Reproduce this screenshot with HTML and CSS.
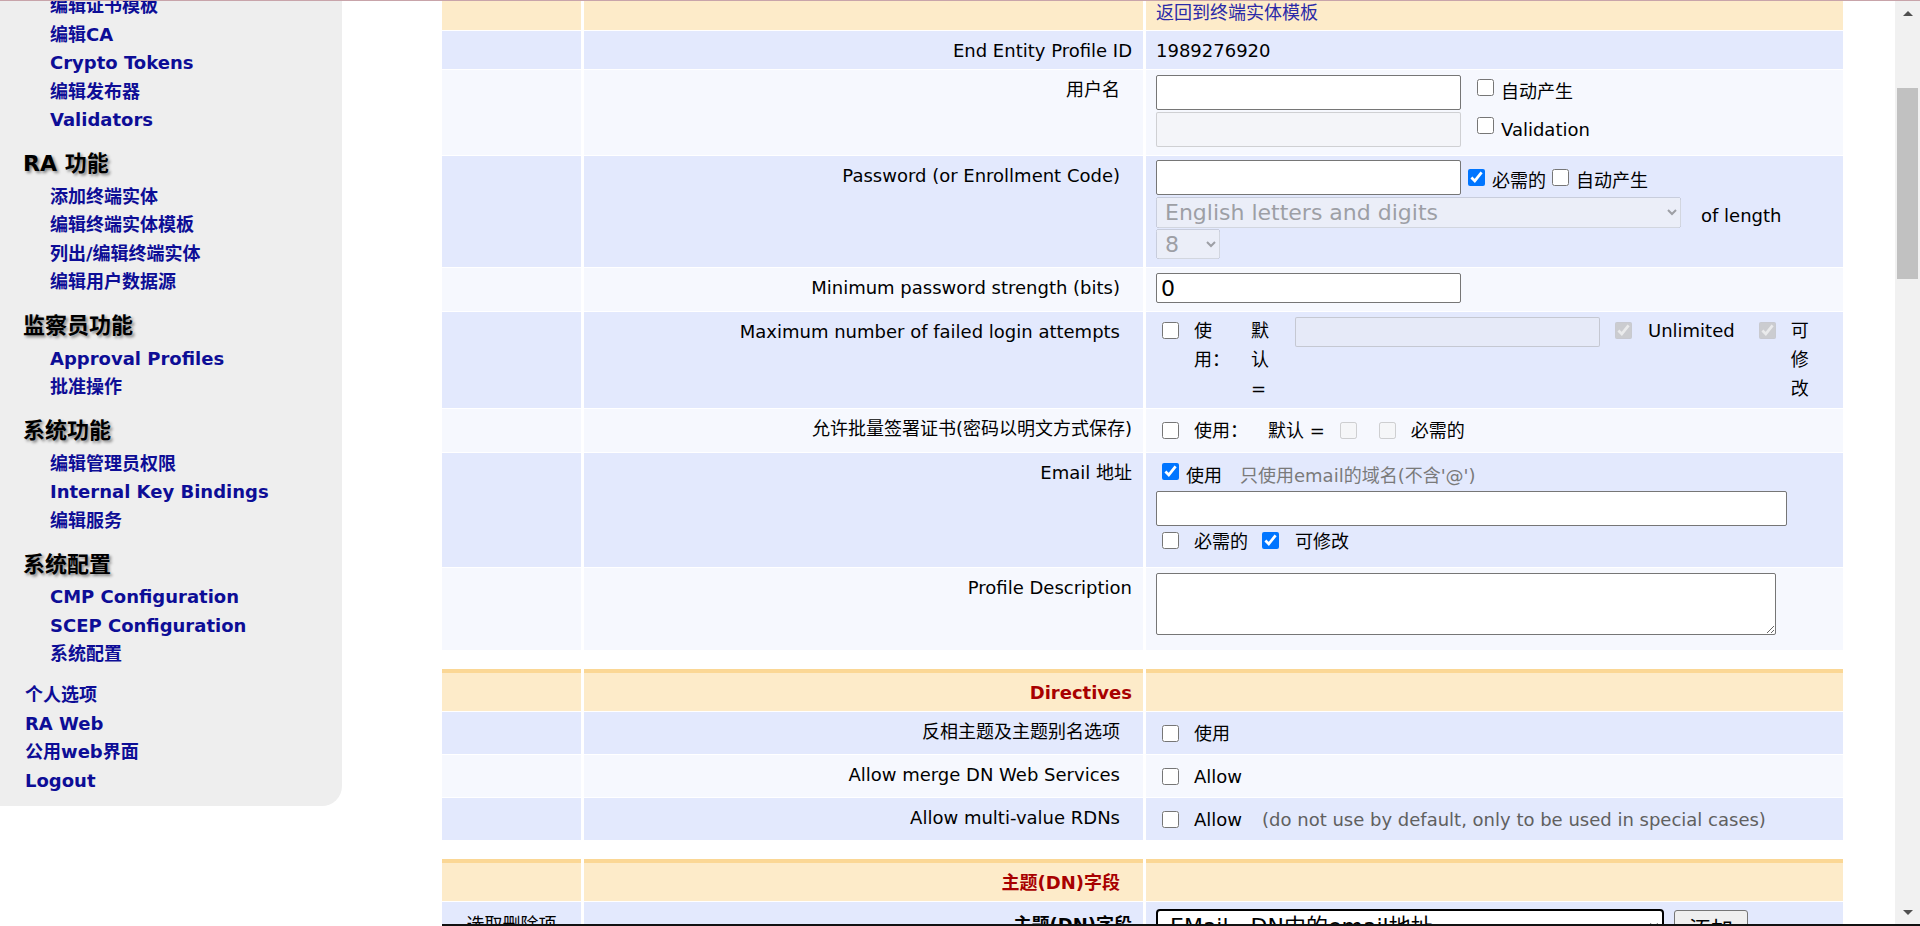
FILE: index.html
```html
<!DOCTYPE html>
<html lang="zh">
<head>
<meta charset="utf-8">
<title>编辑终端实体模板</title>
<link rel="stylesheet" href="styles.css">
</head>
<body>
<div class="page">
  <nav class="sidebar">
    <a class="sub" href="#">编辑证书模板</a>
    <a class="sub" href="#">编辑CA</a>
    <a class="sub" href="#">Crypto Tokens</a>
    <a class="sub" href="#">编辑发布器</a>
    <a class="sub" href="#">Validators</a>
    <h3>RA 功能</h3>
    <a class="sub" href="#">添加终端实体</a>
    <a class="sub" href="#">编辑终端实体模板</a>
    <a class="sub" href="#">列出/编辑终端实体</a>
    <a class="sub" href="#">编辑用户数据源</a>
    <h3>监察员功能</h3>
    <a class="sub" href="#">Approval Profiles</a>
    <a class="sub" href="#">批准操作</a>
    <h3>系统功能</h3>
    <a class="sub" href="#">编辑管理员权限</a>
    <a class="sub" href="#">Internal Key Bindings</a>
    <a class="sub" href="#">编辑服务</a>
    <h3>系统配置</h3>
    <a class="sub" href="#">CMP Configuration</a>
    <a class="sub" href="#">SCEP Configuration</a>
    <a class="sub" href="#">系统配置</a>
    <div class="misc">
      <a href="#">个人选项</a>
      <a href="#">RA Web</a>
      <a href="#">公用web界面</a>
      <a href="#">Logout</a>
    </div>
  </nav>

  <main class="main">
    <table class="grid">
      <colgroup><col class="c1"><col class="c2"><col class="c3"></colgroup>
      <tr class="hd">
        <td></td><td></td>
        <td class="val top"><a class="back" href="#">返回到终端实体模板</a></td>
      </tr>
      <tr class="b r38">
        <td></td>
        <td class="lbl">End Entity Profile ID</td>
        <td class="val">1989276920</td>
      </tr>
      <tr class="l r85">
        <td></td>
        <td class="lbl in">用户名</td>
        <td class="val p5">
          <div class="line">
            <input class="txt" type="text">
            <input class="cb un-cb1" type="checkbox">
            <span class="un-t1">自动产生</span>
          </div>
          <div class="line mt2">
            <input class="txt" type="text" disabled>
            <input class="cb un-cb2" type="checkbox">
            <span class="un-t2">Validation</span>
          </div>
        </td>
      </tr>
      <tr class="b r111">
        <td></td>
        <td class="lbl in">Password (or Enrollment Code)</td>
        <td class="val p4">
          <div class="line">
            <input class="txt" type="text">
            <input class="cb pw-cb1" type="checkbox" checked>
            <span class="pw-t1">必需的</span>
            <input class="cb pw-cb2" type="checkbox">
            <span class="pw-t2">自动产生</span>
          </div>
          <div class="line mt2">
            <select class="sel-chars" disabled><option>English letters and digits</option></select>
            <span class="oflen">of length</span>
          </div>
          <div class="line mt1">
            <select class="sel-len" disabled><option>8</option></select>
          </div>
        </td>
      </tr>
      <tr class="l r43">
        <td></td>
        <td class="lbl in">Minimum password strength (bits)</td>
        <td class="val p5">
          <input class="txt short" type="text" value="0">
        </td>
      </tr>
      <tr class="b r96">
        <td></td>
        <td class="lbl in">Maximum number of failed login attempts</td>
        <td class="val p4">
          <div class="line mf">
            <input class="cb mf-cb1" type="checkbox">
            <span class="nar mf-w1">使用：</span>
            <span class="nar mf-w2">默认 =</span>
            <input class="txt short mf-in" type="text" disabled>
            <input class="cb mf-cb2" type="checkbox" checked disabled>
            <span class="mf-unl">Unlimited</span>
            <input class="cb mf-cb3" type="checkbox" checked disabled>
            <span class="nar mf-w3">可修改</span>
          </div>
        </td>
      </tr>
      <tr class="l r43">
        <td></td>
        <td class="lbl">允许批量签署证书(密码以明文方式保存)</td>
        <td class="val mid">
          <div class="line center">
            <input class="cb ab-cb1" type="checkbox">
            <span class="ab-t1">使用：</span>
            <span class="ab-t2">默认 =</span>
            <input class="cb ab-cb2" type="checkbox" disabled>
            <input class="cb ab-cb3" type="checkbox" disabled>
            <span class="ab-t3">必需的</span>
          </div>
        </td>
      </tr>
      <tr class="b r114">
        <td></td>
        <td class="lbl">Email 地址</td>
        <td class="val p5">
          <div class="line em-l1">
            <input class="cb em-cb1" type="checkbox" checked>
            <span class="em-t1">使用</span>
            <span class="hint em-hint">只使用email的域名(不含'@')</span>
          </div>
          <input class="txt wide" type="text">
          <div class="line em-l3">
            <input class="cb em-cb2" type="checkbox">
            <span class="em-t2">必需的</span>
            <input class="cb em-cb3" type="checkbox" checked>
            <span class="em-t3">可修改</span>
          </div>
        </td>
      </tr>
      <tr class="l r82">
        <td></td>
        <td class="lbl">Profile Description</td>
        <td class="val p5">
          <textarea class="desc"></textarea>
        </td>
      </tr>
    </table>

    <table class="grid">
      <colgroup><col class="c1"><col class="c2"><col class="c3"></colgroup>
      <tr class="hd">
        <td></td>
        <td class="lbl head">Directives</td>
        <td></td>
      </tr>
      <tr class="b r42">
        <td></td>
        <td class="lbl in">反相主题及主题别名选项</td>
        <td class="val mid">
          <div class="line center">
            <input class="cb dir-cb" type="checkbox">
            <span class="dir-t">使用</span>
          </div>
        </td>
      </tr>
      <tr class="l r42">
        <td></td>
        <td class="lbl in">Allow merge DN Web Services</td>
        <td class="val mid">
          <div class="line center">
            <input class="cb dir-cb" type="checkbox">
            <span class="dir-t">Allow</span>
          </div>
        </td>
      </tr>
      <tr class="b r42">
        <td></td>
        <td class="lbl in">Allow multi-value RDNs</td>
        <td class="val mid">
          <div class="line center">
            <input class="cb dir-cb" type="checkbox">
            <span class="dir-t">Allow</span>
            <span class="hint dir-hint">(do not use by default, only to be used in special cases)</span>
          </div>
        </td>
      </tr>
    </table>

    <table class="grid">
      <colgroup><col class="c1"><col class="c2"><col class="c3"></colgroup>
      <tr class="hd">
        <td></td>
        <td class="lbl head in">主题(DN)字段</td>
        <td></td>
      </tr>
      <tr class="b r44">
        <td class="c1txt">选取删除项</td>
        <td class="lbl strong midlbl">主题(DN)字段</td>
        <td class="val p5">
          <div class="line">
            <select class="sel-dn"><option>EMail，DN中的email地址</option></select>
            <button class="btn" type="button">添加</button>
          </div>
        </td>
      </tr>
    </table>
  </main>

  <div class="vscroll">
    <div class="sb-btn"><span class="tri-up"></span></div>
    <div class="sb-track"><div class="sb-thumb"></div></div>
    <div class="sb-btn"><span class="tri-down"></span></div>
  </div>
</div>
</body>
</html>
```

FILE: styles.css
```css
* { box-sizing: border-box; }

html, body {
  margin: 0;
  padding: 0;
  height: 926px;
  overflow: hidden;
  background: #fff;
}

body {
  font-family: "DejaVu Sans", "Noto Sans CJK SC", sans-serif;
  font-size: 18px;
  line-height: 21px;
  color: #000;
}

body::before {
  content: "";
  position: fixed;
  left: 0;
  right: 0;
  top: 0;
  height: 1px;
  background: #c8a4aa;
  z-index: 5;
}

body::after {
  content: "";
  position: fixed;
  left: 442px;
  right: 0;
  bottom: 0;
  height: 2px;
  background: #111;
  z-index: 5;
}

.page {
  display: flex;
  height: 926px;
  overflow: hidden;
}

/* ---------- sidebar ---------- */
.sidebar {
  flex: none;
  width: 342px;
  align-self: flex-start;
  margin-top: -8px;
  padding: 0 0 11px 0;
  background: #eeeeee;
  border-bottom-right-radius: 20px;
}

.sidebar a {
  display: block;
  color: #0d0d96;
  font-weight: bold;
  text-decoration: none;
  line-height: 28.5px;
  white-space: nowrap;
}

.sidebar .sub { padding-left: 50px; }

.sidebar h3 {
  margin: 15.75px 0 4.25px;
  padding-left: 23px;
  font-size: 22px;
  line-height: 28px;
  font-weight: bold;
  color: #000;
  text-shadow: 2px 2px 3px rgba(0, 0, 0, 0.45);
}

.sidebar .misc { margin-top: 12.5px; }
.sidebar .misc a { padding-left: 25px; }

/* ---------- main ---------- */
.main {
  flex: 1;
  min-width: 0;
  margin-top: -13px;
  padding-left: 97px;
}

.grid {
  width: 1407px;
  table-layout: fixed;
  border-collapse: separate;
  border-spacing: 3px 1px;
}

.grid + .grid { margin-top: 17px; }

.c1 { width: 139px; }
.c2 { width: 559px; }
.c3 { width: 697px; }

.grid td {
  padding: 0;
  box-sizing: border-box;
}

tr.hd { height: 42px; }
tr.hd td {
  background: #fdebc9;
  border-top: 4px solid #fbd795;
}

tr.b td { background: #e3e9fd; }
tr.l td { background: #f6f8fe; }

tr.r38 { height: 38px; }
tr.r42 { height: 42px; }
tr.r43 { height: 43px; }
tr.r44 { height: 44px; }
tr.r82 { height: 82px; }
tr.r85 { height: 85px; }
tr.r96 { height: 96px; }
tr.r111 { height: 111px; }
tr.r114 { height: 114px; }

.grid td.lbl {
  text-align: right;
  vertical-align: top;
  padding: 8.5px 11px 0 0;
  white-space: nowrap;
}
.grid td.lbl.in { padding-right: 23px; }
.grid td.lbl.head { color: #a80000; font-weight: bold; }
.grid td.lbl.strong { font-weight: bold; }
.grid td.lbl.midlbl { vertical-align: middle; padding-top: 0; }

.grid td.c1txt {
  text-align: center;
  vertical-align: middle;
}

.grid td.val {
  vertical-align: top;
  padding: 8.5px 10px 0;
}
.grid td.val.top { padding-top: 10px; }
.grid td.val.p4 { padding-top: 4px; }
.grid td.val.p5 { padding-top: 5px; }
.grid td.val.mid { vertical-align: middle; padding-top: 0; }

.back {
  color: #2a2aa8;
  text-decoration: none;
}

.line {
  display: flex;
  align-items: flex-start;
  white-space: nowrap;
}
.line.center { align-items: center; }
.mt1 { margin-top: 1px; }
.mt2 { margin-top: 2px; }

/* ---------- controls ---------- */
.txt {
  flex: none;
  display: block;
  width: 305px;
  height: 35px;
  margin: 0;
  padding: 1px 4px;
  border: 1px solid #767676;
  border-radius: 2px;
  background: #fff;
  font-family: "DejaVu Sans", "Noto Sans CJK SC", sans-serif;
  font-size: 22px;
  color: #000;
}
.txt.short { height: 30px; }
.txt.wide { width: 631px; }
.txt:disabled {
  background: rgba(239, 239, 239, 0.3);
  border-color: rgba(118, 118, 118, 0.3);
}

.cb {
  flex: none;
  width: 17px;
  height: 17px;
  margin: 0;
}

.hint { color: #7a7a7a; }

/* username row */
.un-cb1 { margin: 4px 0 0 16px; }
.un-t1 { margin: 5.5px 0 0 7px; }
.un-cb2 { margin: 5px 0 0 16px; }
.un-t2 { margin: 6.5px 0 0 7px; }

/* password row */
.pw-cb1 { margin: 9px 0 0 7px; }
.pw-t1 { margin: 9.5px 0 0 7px; }
.pw-cb2 { margin: 9px 0 0 6px; }
.pw-t2 { margin: 9.5px 0 0 7px; }

.sel-chars,
.sel-len {
  flex: none;
  margin: 0;
  padding: 0 4px;
  font-family: "DejaVu Sans", sans-serif;
  font-size: 22px;
}
.sel-chars { width: 525px; height: 31px; }
.sel-len { width: 64px; height: 30px; }
.oflen { margin: 7.5px 0 0 20px; }

/* max failed login attempts */
.nar {
  flex: none;
  display: block;
  width: 20px;
  line-height: 29px;
  white-space: normal;
}
.mf-cb1 { margin: 6px 0 0 6px; }
.mf-w1 { margin-left: 15px; }
.mf-w2 { margin-left: 37px; }
.mf-in { margin: 1px 0 0 24px; }
.mf-cb2 { margin: 6px 0 0 15px; }
.mf-unl { margin: 3.5px 0 0 16px; }
.mf-cb3 { margin: 6px 0 0 24px; }
.mf-w3 { margin-left: 15px; }

/* batch row */
.ab-cb1 { margin-left: 6px; }
.ab-t1 { margin-left: 15px; }
.ab-t2 { margin-left: 20px; }
.ab-cb2 { margin-left: 15px; }
.ab-cb3 { margin-left: 22px; }
.ab-t3 { margin-left: 15px; }

/* email row */
.em-l1 { height: 33px; }
.em-cb1 { margin: 5px 0 0 6px; }
.em-t1 { margin: 6.5px 0 0 7px; }
.em-hint { margin: 6.5px 0 0 18px; }
.em-l3 { height: 30px; }
.em-cb2 { margin: 6px 0 0 6px; }
.em-t2 { margin: 4.5px 0 0 15px; }
.em-cb3 { margin: 6px 0 0 14px; }
.em-t3 { margin: 4.5px 0 0 16px; }

.desc {
  display: block;
  width: 620px;
  height: 62px;
  margin: 0;
  border: 1px solid #767676;
  border-radius: 2px;
  background: #fff;
  resize: both;
  font-family: "DejaVu Sans", sans-serif;
  font-size: 18px;
}

/* directives */
.dir-cb { margin-left: 6px; }
.dir-t { margin-left: 15px; }
.dir-hint { margin-left: 20px; color: #606060; }

/* DN row */
.sel-dn {
  flex: none;
  width: 508px;
  height: 34px;
  margin: 2px 0 0 0;
  padding: 0 8px;
  border: 2px solid #000;
  border-radius: 4px;
  background: #fff;
  color: #000;
  font-family: "DejaVu Sans", "Noto Sans CJK SC", sans-serif;
  font-size: 22px;
}
.btn {
  flex: none;
  height: 34px;
  margin: 3px 0 0 10px;
  padding: 0 14px;
  border: 1px solid #767676;
  border-radius: 3px;
  background: #efefef;
  color: #000;
  font-family: "Noto Sans CJK SC", sans-serif;
  font-size: 22px;
  line-height: 30px;
}

/* ---------- fake scrollbar ---------- */
.vscroll {
  flex: none;
  width: 25px;
  height: 926px;
  display: flex;
  flex-direction: column;
  background: #f1f1f1;
}
.sb-btn {
  flex: none;
  height: 27px;
  display: flex;
  align-items: center;
  justify-content: center;
}
.tri-up {
  width: 0;
  height: 0;
  border-left: 5px solid transparent;
  border-right: 5px solid transparent;
  border-bottom: 5px solid #505050;
}
.tri-down {
  width: 0;
  height: 0;
  border-left: 5px solid transparent;
  border-right: 5px solid transparent;
  border-top: 5px solid #505050;
}
.sb-track { flex: 1; }
.sb-thumb {
  margin: 61px 2px 0;
  height: 191px;
  background: #c1c1c1;
}
```
